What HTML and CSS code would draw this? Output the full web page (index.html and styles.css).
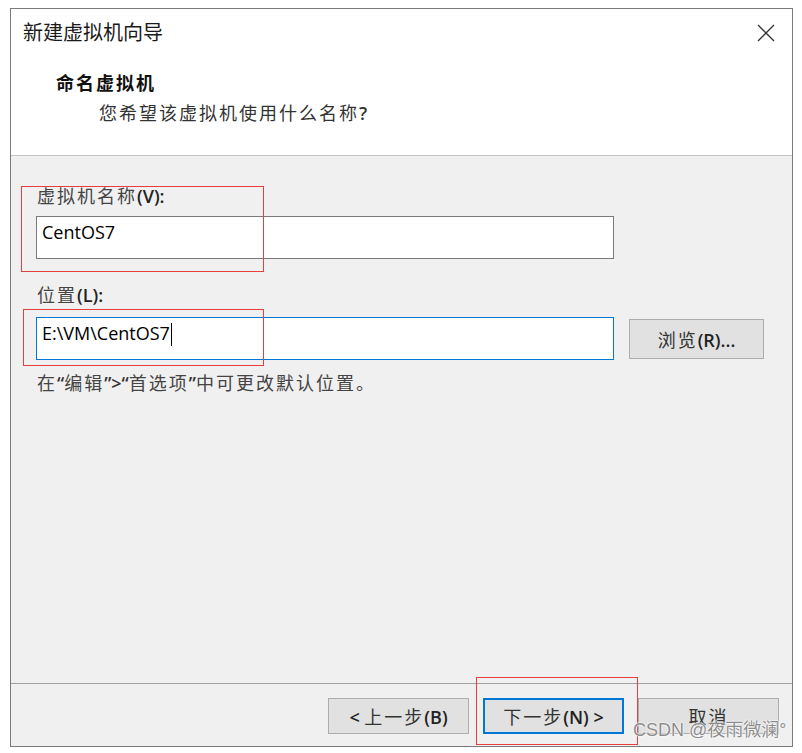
FILE: index.html
```html
<!DOCTYPE html>
<html lang="zh-CN">
<head>
    <meta charset="UTF-8">
    <meta name="viewport" content="width=device-width, initial-scale=1.0">
    <title>新建虚拟机向导</title>
    <link rel="stylesheet" href="styles.css">
</head>
<body>
    <div class="dialog">
        <div class="header">
            <div class="titlebar">
                <span class="title">新建虚拟机向导</span>
                <svg class="close" width="18" height="18" viewBox="0 0 18 18">
                    <path d="M1 1 L17 17 M17 1 L1 17" stroke="#333" stroke-width="1.3" fill="none"/>
                </svg>
            </div>
            <div class="heading">命名虚拟机</div>
            <div class="subtitle">您希望该虚拟机使用什么名称<span class="lat">?</span></div>
        </div>

        <div class="content">
            <div class="label">虚拟机名称<span class="lat">(V):</span></div>
            <div class="field">CentOS7</div>

            <div class="label second">位置<span class="lat">(L):</span></div>
            <div class="row">
                <div class="field active">E:\VM\CentOS7<span class="caret"></span></div>
                <button class="btn browse">浏览<span class="lat">(R)...</span></button>
            </div>

            <div class="hint">在<span class="lat">“</span>编辑<span class="lat">”&gt;“</span>首选项<span class="lat">”</span>中可更改默认位置。</div>
        </div>

        <div class="footer">
            <button class="btn"><span class="lat">&lt; </span>上一步<span class="lat">(B)</span></button>
            <button class="btn primary">下一步<span class="lat">(N) &gt;</span></button>
            <button class="btn">取消</button>
        </div>

        <!-- red annotation boxes drawn over the dialog -->
        <div class="mark mark-name"></div>
        <div class="mark mark-path"></div>
        <div class="mark mark-next"></div>

        <div class="watermark">CSDN @夜雨微澜°</div>
    </div>
</body>
</html>
```

FILE: styles.css
```css
body {
    margin: 0;
    background: #fff;
    font-family: "Noto Sans CJK SC", "Open Sans", sans-serif;
}
.dialog {
    position: relative;
    box-sizing: border-box;
    margin: 8px 0 0 10px;
    width: 783px;
    height: 739px;
    border: 1px solid #7a7a7a;
    background: #f0f0f0;
    display: flex;
    flex-direction: column;
}
.lat {
    font-family: "Open Sans", sans-serif;
    font-weight: 600;
    letter-spacing: 0;
}
.header {
    background: #fff;
    border-bottom: 1px solid #c4c4c4;
    padding-top: 10px;
    height: 136px;
}
.titlebar {
    display: flex;
    justify-content: space-between;
    align-items: center;
    padding: 0 17px 0 12px;
    height: 26px;
}
.title {
    font-size: 20px;
    line-height: 26px;
    color: #1a1a1a;
}
.close {
    margin-top: 2px;
}
.heading {
    margin: 25px 0 0 45px;
    font-size: 18px;
    line-height: 24px;
    font-weight: bold;
    letter-spacing: 2px;
    color: #111;
}
.subtitle {
    margin: 6px 0 0 88px;
    font-size: 18px;
    line-height: 24px;
    letter-spacing: 2px;
    color: #333;
}
.content {
    flex: 1;
    padding: 27px 0 0 25px;
}
.label {
    padding-left: 1px;
    font-size: 18px;
    line-height: 24px;
    letter-spacing: 2px;
    color: #444;
    margin-bottom: 8px;
}
.label .lat {
    color: #222;
}
.label.second {
    margin-top: 23px;
    margin-bottom: 10px;
}
.field {
    box-sizing: border-box;
    width: 578px;
    height: 43px;
    padding: 3px 5px 0;
    border: 1px solid #7a7a7a;
    background: #fff;
    font-family: "Open Sans", sans-serif;
    font-size: 18px;
    line-height: 24px;
    color: #000;
}
.field.active {
    border-color: #0078d7;
}
.caret {
    display: inline-block;
    width: 1px;
    height: 23px;
    margin-left: 1px;
    background: #000;
    vertical-align: -6px;
}
.row {
    display: flex;
    align-items: center;
}
.btn {
    box-sizing: border-box;
    width: 141px;
    height: 36px;
    border: 1px solid #adadad;
    background: #e1e1e1;
    font-family: "Noto Sans CJK SC", "Open Sans", sans-serif;
    font-size: 18px;
    letter-spacing: 2px;
    color: #333;
    padding: 0;
}
.btn .lat {
    color: #222;
}
.btn.browse {
    width: 135px;
    height: 40px;
    margin-left: 15px;
}
.btn.primary {
    border: 2px solid #0078d7;
}
.hint {
    margin-top: 10px;
    padding-left: 1px;
    font-size: 18px;
    line-height: 24px;
    letter-spacing: 2px;
    color: #444;
}
.hint .lat {
    color: #333;
}
.footer {
    height: 63px;
    border-top: 1px solid #a0a0a0;
    display: flex;
    justify-content: flex-end;
    align-items: flex-start;
    gap: 14px;
    padding: 14px 13px 0 0;
    box-sizing: border-box;
}
.mark {
    position: absolute;
    box-sizing: border-box;
    border: 1px solid #e53e3e;
}
.mark-name {
    left: 10px;
    top: 177px;
    width: 243px;
    height: 86px;
}
.mark-path {
    left: 12px;
    top: 300px;
    width: 241px;
    height: 57px;
}
.mark-next {
    left: 465px;
    top: 668px;
    width: 162px;
    height: 68px;
}
.watermark {
    position: absolute;
    left: 622px;
    top: 710px;
    font-family: "Liberation Sans", "Noto Sans CJK SC", sans-serif;
    font-size: 18px;
    line-height: 22px;
    color: #8c8c8c;
    text-shadow: 0 0 2px #fff, 0 0 2px #fff, 0 0 1px #fff;
    white-space: nowrap;
}
```
